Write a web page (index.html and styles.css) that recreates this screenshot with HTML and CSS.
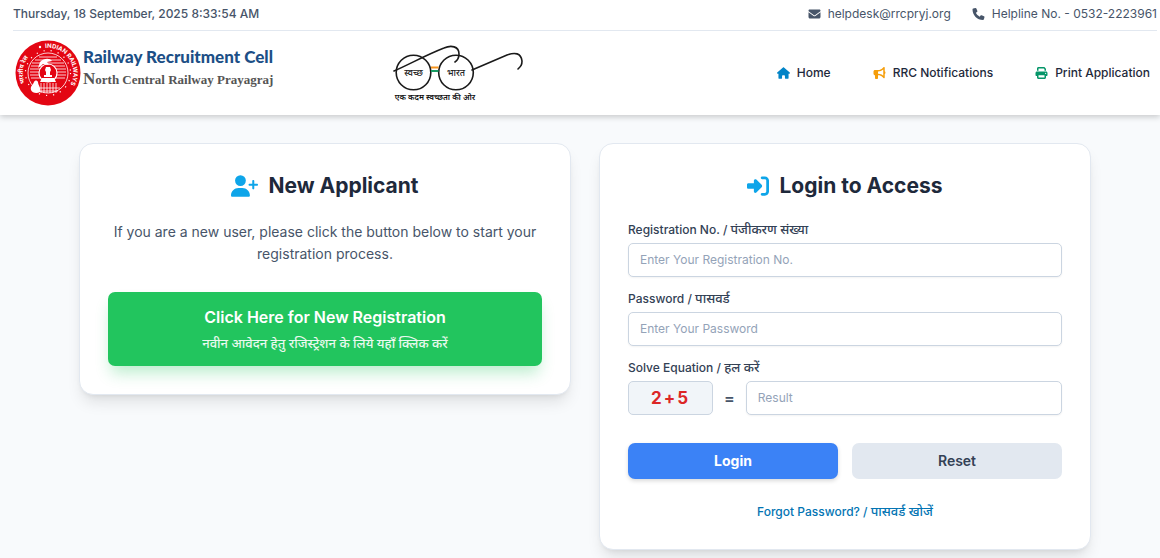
FILE: index.html
```html
<!DOCTYPE html>
<html lang="en">
<head>
    <meta charset="UTF-8">
    <meta name="viewport" content="width=device-width, initial-scale=1.0">
    <title>Railway Recruitment Cell - Prayagraj</title>
    <link rel="stylesheet" href="styles.css">
</head>
<body>
    <header class="header">
        <div class="topbar">
            <div class="clock">Thursday, 18 September, 2025 8:33:54 AM</div>
            <div class="contact">
                <span class="contact-item">
                    <svg class="icon" viewBox="0 0 512 512"><path d="M48 64C21.5 64 0 85.5 0 112c0 15.1 7.1 29.3 19.2 38.4L236.8 313.6c11.4 8.5 27 8.5 38.4 0L492.8 150.4c12.1-9.1 19.2-23.3 19.2-38.4c0-26.5-21.5-48-48-48H48zM0 176V384c0 35.3 28.7 64 64 64H448c35.3 0 64-28.7 64-64V176L294.4 339.2c-22.8 17.1-54 17.1-76.8 0L0 176z"/></svg>
                    helpdesk@rrcpryj.org
                </span>
                <span class="contact-item">
                    <svg class="icon" viewBox="0 0 512 512"><path d="M164.9 24.6c-7.7-18.6-28-28.5-47.4-23.2l-88 24C12.1 30.2 0 46 0 64C0 311.4 200.6 512 448 512c18 0 33.8-12.1 38.6-29.5l24-88c5.3-19.4-4.6-39.7-23.2-47.4l-96-40c-16.3-6.8-35.2-2.1-46.3 11.6L304.7 368C234.3 334.7 177.3 277.7 144 207.3L193.3 167c13.7-11.2 18.4-30 11.6-46.3l-40-96z"/></svg>
                    Helpline No. - 0532-2223961
                </span>
            </div>
        </div>
        <div class="navbar">
            <div class="brand">
                <svg class="emblem" viewBox="0 0 66 66">
                    <defs>
                        <path id="ring-en" d="M30.400 8.100A25 25 0 0 1 43 56"/>
                        <path id="ring-hi" d="M10 43A25 25 0 0 1 26 9"/>
                    </defs>
                    <circle cx="33" cy="33" r="32.500" fill="#e30613"/>
                    <circle cx="33" cy="33" r="20" fill="none" stroke="#fff" stroke-width="0.800"/>
                    <g stroke="#fff" stroke-width="0.800">
                        <path d="M24 17h18M20 20h26M17 23h32M16 26h34M15 29h36M15 32h36M15 35h36M16 38h34"/>
                    </g>
                    <path d="M21 48h24M23 51h20M26 43v10M29 43v10M32 43v10M35 43v10M38 43v10M41 43v10" stroke="#fff" stroke-width="0.800"/>
                    <circle cx="33" cy="33" r="9" fill="#e30613" stroke="#fff" stroke-width="1.200"/>
                    <path d="M31 27h4l1 3-1 2v3h2v2h-8v-2h2v-3l-1-2z" fill="#fff"/>
                    <path d="M27 38h12l2 4H25z" fill="#fff"/>
                    <path d="M25 22c4-4 10-4 12-1l-5 1 2 3-6-1-5 4z" fill="#fff"/>
                    <path d="M16 50c-1-4 2-5 3-8 1-2 3-2 4 0 0 3 3 5 2 10-3 2-8 1-9-2z" fill="#fff"/>
                    <circle cx="33" cy="33" r="22.500" fill="none" stroke="#fff" stroke-width="1.200" stroke-dasharray="1.200 6"/>
                    <circle cx="25" cy="7" r="1.200" fill="#fff"/>
                    <text class="ring-text"><textPath href="#ring-en">INDIAN RAILWAYS</textPath></text>
                    <text class="ring-text"><textPath href="#ring-hi">भारतीय रेल</textPath></text>
                </svg>
                <div class="brand-text">
                    <div class="brand-name">Railway Recruitment Cell</div>
                    <div class="brand-zone"><span class="brand-initial">N</span>orth Central Railway Prayagraj</div>
                </div>
            </div>
            <svg class="swachh" viewBox="0 0 132 62">
                <g fill="none" stroke="#1a1a1a" stroke-width="1.600" stroke-linecap="round">
                    <circle cx="20.500" cy="30.500" r="17.300"/>
                    <circle cx="63" cy="30.500" r="17.300"/>
                    <path d="M1 29C17 22 33 13 51 6c7-3 15-2 15 6 0 4-1 6-4 8"/>
                    <path d="M79 28l35-15c8-3 14-2 15 6 0 4-1 5-4 8"/>
                </g>
                <path d="M38 25.500h7.500" stroke="#f7941d" stroke-width="2"/>
                <path d="M38 29h7.500" stroke="#169b62" stroke-width="2"/>
                <text class="lens-text" x="20.500" y="34">स्वच्छ</text>
                <text class="lens-text" x="63" y="34">भारत</text>
                <text class="slogan-text" x="42" y="58">एक कदम स्वच्छता की ओर</text>
            </svg>
            <nav class="nav">
                <a href="#" class="nav-link">
                    <svg class="icon icon-home" viewBox="0 0 576 512"><path d="M575.8 255.5c0 18-15 32.1-32 32.1h-32l.7 160.2c0 2.7-.2 5.4-.5 8.1V472c0 22.1-17.9 40-40 40H456c-1.1 0-2.2 0-3.3-.1c-1.4 .1-2.8 .1-4.2 .1H416 392c-22.1 0-40-17.9-40-40V448 384c0-17.7-14.3-32-32-32H256c-17.7 0-32 14.3-32 32v64 24c0 22.1-17.9 40-40 40H160 128.1c-1.5 0-3-.1-4.5-.2c-1.2 .1-2.4 .2-3.6 .2H104c-22.1 0-40-17.9-40-40V360c0-.9 0-1.9 .1-2.8V287.6H32c-18 0-32-14-32-32.1c0-9 3-17 10-24L266.4 8c7-7 15-8 22-8s15 2 21 7L564.8 231.5c8 7 12 15 11 24z"/></svg>
                    Home
                </a>
                <a href="#" class="nav-link">
                    <svg class="icon icon-news" viewBox="0 0 512 512"><path d="M480 32c0-12.9-7.8-24.6-19.8-29.6s-25.7-2.2-34.9 6.9L381.7 53c-48 48-113.1 75-181 75H192 160 64c-35.3 0-64 28.7-64 64v96c0 35.3 28.7 64 64 64l0 128c0 17.7 14.3 32 32 32h64c17.7 0 32-14.3 32-32V352l8.7 0c67.9 0 133 27 181 75l43.6 43.6c9.2 9.2 22.9 11.9 34.9 6.9s19.8-16.6 19.8-29.6V300.4c18.6-8.8 32-32.5 32-60.4s-13.4-51.6-32-60.4V32zm-64 76.7V240 371.3C357.2 317.8 280.5 288 200.7 288H192V192h8.7c79.8 0 156.5-29.8 215.3-83.3z"/></svg>
                    RRC Notifications
                </a>
                <a href="#" class="nav-link">
                    <svg class="icon icon-print" viewBox="0 0 512 512"><path d="M128 0C92.7 0 64 28.7 64 64v96h64V64H354.7L384 93.3V160h64V93.3c0-17-6.7-33.3-18.7-45.3L400 18.7C388 6.7 371.7 0 354.7 0H128zM384 352v32 64H128V384 368 352H384zm64 32h32c17.7 0 32-14.3 32-32V256c0-35.3-28.7-64-64-64H64c-35.3 0-64 28.7-64 64v96c0 17.7 14.3 32 32 32H64v64c0 35.3 28.7 64 64 64H384c35.3 0 64-28.7 64-64V384zM432 248a24 24 0 1 1 0 48 24 24 0 1 1 0-48z"/></svg>
                    Print Application
                </a>
            </nav>
        </div>
    </header>

    <main class="main">
        <section class="card">
            <h2 class="card-title">
                <svg class="title-icon title-icon-wide" viewBox="0 0 640 512"><path d="M96 128a128 128 0 1 1 256 0A128 128 0 1 1 96 128zM0 482.3C0 383.8 79.8 304 178.3 304h91.4C368.2 304 448 383.8 448 482.3c0 16.4-13.3 29.7-29.7 29.7H29.7C13.3 512 0 498.7 0 482.3zM504 312V248H440c-13.3 0-24-10.7-24-24s10.7-24 24-24h64V136c0-13.3 10.7-24 24-24s24 10.7 24 24v64h64c13.3 0 24 10.7 24 24s-10.7 24-24 24H552v64c0 13.3-10.7 24-24 24s-24-10.7-24-24z"/></svg>
                New Applicant
            </h2>
            <p class="intro">If you are a new user, please click the button below to start your registration process.</p>
            <button type="button" class="btn-register">
                <span class="register-en">Click Here for New Registration</span>
                <span class="register-hi">नवीन आवेदन हेतु रजिस्ट्रेशन के लिये यहाँ क्लिक करें</span>
            </button>
        </section>

        <section class="card">
            <h2 class="card-title">
                <svg class="title-icon" viewBox="0 0 512 512"><path d="M217.9 105.9L340.7 228.7c7.2 7.2 11.3 17.1 11.3 27.3s-4.1 20.1-11.3 27.3L217.9 406.1c-6.4 6.4-15 9.9-24 9.9c-18.7 0-33.9-15.2-33.9-33.9l0-62.1L32 320c-17.7 0-32-14.3-32-32l0-64c0-17.7 14.3-32 32-32l128 0 0-62.1c0-18.7 15.2-33.9 33.9-33.9c9 0 17.6 3.6 24 9.9zM352 416l64 0c17.7 0 32-14.3 32-32l0-256c0-17.7-14.3-32-32-32l-64 0c-17.7 0-32-14.3-32-32s14.3-32 32-32l64 0c53 0 96 43 96 96l0 256c0 53-43 96-96 96l-64 0c-17.7 0-32-14.3-32-32s14.3-32 32-32z"/></svg>
                Login to Access
            </h2>
            <form class="login-form">
                <div class="field">
                    <label for="regno">Registration No. / <span class="hindi">पंजीकरण संख्या</span></label>
                    <input type="text" id="regno" name="regno" placeholder="Enter Your Registration No.">
                </div>
                <div class="field">
                    <label for="password">Password / <span class="hindi">पासवर्ड</span></label>
                    <input type="password" id="password" name="password" placeholder="Enter Your Password">
                </div>
                <div class="field">
                    <label for="result">Solve Equation / <span class="hindi">हल करें</span></label>
                    <div class="equation">
                        <div class="captcha">2+5</div>
                        <span class="equals">=</span>
                        <input type="text" id="result" name="result" placeholder="Result">
                    </div>
                </div>
                <div class="actions">
                    <button type="submit" class="btn btn-login">Login</button>
                    <button type="reset" class="btn btn-reset">Reset</button>
                </div>
                <a href="#" class="forgot">Forgot Password? / <span class="hindi">पासवर्ड खोजें</span></a>
            </form>
        </section>
    </main>
</body>
</html>
```
FILE: styles.css
```css
* { box-sizing: border-box; }
body { margin: 0; font-family: Inter, "Noto Sans Devanagari", sans-serif; font-size: 14px; color: #1e293b; background-color: #f8fafc; }
button, input { font-family: inherit; }
svg { flex-shrink: 0; }

/* header */
.header { background-color: #fff; padding: 0 3px 0 13px; box-shadow: 0 2px 6px rgba(0, 0, 0, 0.2); }
.topbar { display: flex; justify-content: space-between; align-items: center; padding: 5px 0 7px; line-height: 18px; font-size: 12px; color: #475569; border-bottom: 1px solid #e2e8f0; }
.clock { font-weight: 500; }
.contact { display: flex; gap: 21px; }
.contact-item { display: flex; align-items: center; gap: 7px; }
.icon { width: 13px; height: 12px; fill: currentColor; }
.navbar { display: flex; align-items: center; padding: 9px 7px 9px 2px; }
.brand { display: flex; align-items: center; gap: 2px; }
.emblem { width: 66px; height: 66px; }
.ring-text { font: bold 6px Inter, "Noto Sans Devanagari", sans-serif; fill: #fff; }
.brand-text { padding-bottom: 12px; white-space: nowrap; }
.brand-name { font: 900 17px/24px Lato, sans-serif; color: #1c4f86; }
.brand-zone { font: bold 13px/20px "Liberation Serif", serif; color: #555; }
.brand-initial { font-size: 17px; }
.swachh { width: 132px; height: 62px; margin-left: 120px; }
.lens-text { font: 500 9px "Noto Sans Devanagari", sans-serif; text-anchor: middle; fill: #222; }
.slogan-text { font: 600 8px "Noto Sans Devanagari", sans-serif; text-anchor: middle; fill: #111; }
.nav { display: flex; gap: 42px; margin-left: auto; }
.nav-link { display: flex; align-items: center; gap: 7px; font-size: 12px; font-weight: 500; line-height: 18px; color: #1e293b; text-decoration: none; }
.icon-home { fill: #0284c7; }
.icon-news { fill: #f59e0b; }
.icon-print { fill: #059669; }

/* cards */
.main { display: grid; grid-template-columns: 1fr 1fr; gap: 28px; align-items: start; padding: 28px 69px 28px 79px; }
.card { padding: 28px; background-color: #fff; border: 1px solid #e2e8f0; border-radius: 14px; box-shadow: 0 10px 15px -3px rgba(0, 0, 0, 0.1), 0 4px 6px -4px rgba(0, 0, 0, 0.1); }
.card-title { display: flex; justify-content: center; align-items: center; gap: 10px; margin: 0 0 21px; font-size: 21px; font-weight: 700; line-height: 28px; }
.title-icon { width: 22px; height: 22px; fill: #0ea5e9; }
.title-icon-wide { width: 27px; }
.intro { margin: 0 0 27px; text-align: center; line-height: 22px; color: #475569; }
.btn-register { display: block; width: 100%; padding: 13px 14px; text-align: center; color: #fff; background-color: #22c55e; border: none; border-radius: 7px; box-shadow: 0 10px 15px -3px rgba(34, 197, 94, 0.3); cursor: pointer; }
.register-en { display: block; font-size: 16px; font-weight: 600; line-height: 24px; }
.register-hi { display: block; margin-top: 4px; font-size: 13px; font-weight: 500; line-height: 20px; opacity: 0.9; }

/* login form */
.field { margin-bottom: 13px; }
.field label { display: block; margin-bottom: 4px; font-size: 12px; font-weight: 500; line-height: 18px; color: #334155; }
.hindi { font-size: 13px; line-height: 1; }
.field input { width: 100%; height: 34px; padding: 0 11px 2px; font-size: 12px; color: #1e293b; background-color: #fff; border: 1px solid #cbd5e1; border-radius: 5px; box-shadow: 0 1px 2px rgba(0, 0, 0, 0.05); }
.field input::placeholder { color: #94a3b8; }
.equation { display: flex; align-items: center; gap: 11px; }
.equation input { flex: 1; }
.captcha { width: 85px; height: 34px; font-size: 17px; font-weight: 700; line-height: 32px; letter-spacing: 2px; text-align: center; color: #dc2626; background-color: #f1f5f9; border: 1px solid #cbd5e1; border-radius: 5px; }
.equals { font-size: 16px; font-weight: 600; color: #475569; }
.actions { display: grid; grid-template-columns: 1fr 1fr; gap: 14px; margin-top: 28px; }
.btn { height: 36px; padding: 0 14px 2px; font-size: 14px; font-weight: 600; border: none; border-radius: 7px; cursor: pointer; }
.btn-login { font-weight: 700; color: #fff; background-color: #3b82f6; box-shadow: 0 2px 4px rgba(0, 0, 0, 0.15); }
.btn-reset { color: #334155; background-color: #e2e8f0; }
.forgot { display: block; width: fit-content; margin: 24px auto 0; font-size: 12px; font-weight: 500; line-height: 18px; color: #0274b3; text-decoration: none; }
```
